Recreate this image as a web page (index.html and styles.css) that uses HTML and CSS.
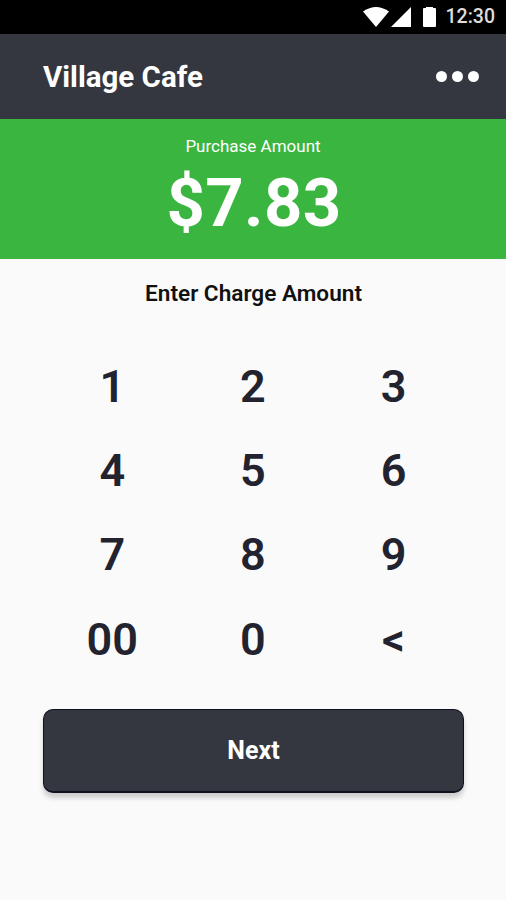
FILE: index.html
```html
<!DOCTYPE html>
<html lang="en">
<head>
  <meta charset="utf-8">
  <meta name="viewport" content="width=device-width, initial-scale=1.0">
  <title>Village Cafe</title>
  <link rel="stylesheet" href="styles.css">
</head>
<body>
  <div class="status-bar">
    <svg class="wifi" width="26" height="20" viewBox="0 0 26 20"><path d="M0 4.500Q13-4.500 26 4.500L13 20Z"/></svg>
    <svg class="signal" width="20" height="20" viewBox="0 0 20 20"><path d="M20 0V20H0Z"/></svg>
    <svg class="battery" width="13" height="20" viewBox="0 0 13 20"><path d="M3 0H10V1H12Q13 1 13 2V19Q13 20 12 20H1Q0 20 0 19V2Q0 1 1 1H3Z"/></svg>
    <span class="clock">12:30</span>
  </div>

  <header class="app-bar">
    <h1>Village Cafe</h1>
    <button class="more" aria-label="More"><i></i><i></i><i></i></button>
  </header>

  <section class="amount">
    <div class="amount-label">Purchase Amount</div>
    <div class="amount-value">$7.83</div>
  </section>

  <main>
    <h2>Enter Charge Amount</h2>
    <div class="keypad">
      <button>1</button>
      <button>2</button>
      <button>3</button>
      <button>4</button>
      <button>5</button>
      <button>6</button>
      <button>7</button>
      <button>8</button>
      <button>9</button>
      <button>00</button>
      <button>0</button>
      <button>&lt;</button>
    </div>
    <button class="next">Next</button>
  </main>
</body>
</html>
```
FILE: styles.css
```css
* {
  box-sizing: border-box;
}
body {
  margin: 0;
  min-height: 900px;
  background: #fafafa;
  color: #22232f;
  font-family: Roboto, sans-serif;
}
button {
  padding: 0;
  border: 0;
  background: none;
  color: inherit;
  font-family: inherit;
}
h1, h2 {
  margin: 0;
}

.status-bar {
  display: flex;
  justify-content: flex-end;
  align-items: center;
  height: 34px;
  padding-right: 11px;
  background: #000;
  color: #fff;
}
.status-bar svg {
  fill: #fff;
}
.signal {
  margin-left: 2px;
}
.battery {
  margin: 0 10px 0 12px;
}
.clock {
  color: #ddd;
  font-size: 19.5px;
  font-weight: 500;
  line-height: 36px;
}

.app-bar {
  display: flex;
  justify-content: space-between;
  align-items: center;
  height: 85px;
  padding: 0 27px 0 43px;
  background: #353740;
  color: #fff;
}
.app-bar h1 {
  font-size: 29.5px;
  font-weight: 700;
}
.more {
  display: flex;
  gap: 4.500px;
}
.more i {
  width: 11.500px;
  height: 11.500px;
  border-radius: 50%;
  background: #fff;
}

.amount {
  height: 140px;
  padding-top: 16px;
  background: #3ab53f;
  color: #fff;
  text-align: center;
}
.amount-label {
  font-size: 17px;
  line-height: 23px;
}
.amount-value {
  padding-left: 2px;
  font-size: 67px;
  font-weight: 700;
  letter-spacing: 0.4px;
  line-height: 90px;
}

main {
  padding: 0 42px 0 43px;
}
main h2 {
  padding-top: 20px;
  color: #111;
  font-size: 22.6px;
  font-weight: 600;
  line-height: 30px;
  text-align: center;
}
.keypad {
  display: grid;
  grid-template-columns: repeat(3, 140.600px);
  grid-auto-rows: 84.4px;
  margin: 35px -1px 0;
}
.keypad button {
  font-size: 45px;
  font-weight: 600;
}
.next {
  display: block;
  width: 100%;
  height: 84px;
  margin-top: 27px;
  border: 1px solid #10111f;
  border-bottom-width: 2px;
  border-radius: 10px;
  background: #353740;
  box-shadow: 0 5px 5px rgba(0, 0, 0, 0.18);
  color: #fff;
  font-size: 25px;
  font-weight: 700;
}
```
